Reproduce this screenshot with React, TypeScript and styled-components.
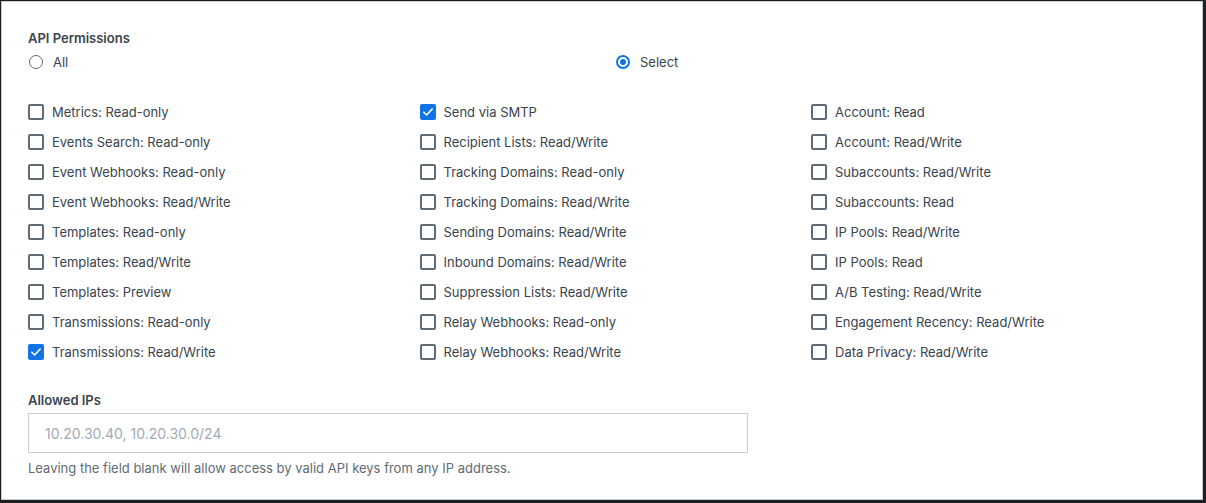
import React, { FC } from 'react';
import styled, { createGlobalStyle } from 'styled-components';

const GlobalStyle = createGlobalStyle`
  html, body {
    margin: 0;
    padding: 0;
    background: #ffffff;
  }
  body {
    font-family: Inter, "Noto Sans", sans-serif;
    -webkit-font-smoothing: antialiased;
  }
`;

const Frame = styled.div`
  box-sizing: border-box;
  width: 1206px;
  height: 503px;
  border-style: solid;
  border-color: #1e1f21;
  border-width: 1px 3px 3px 1px;
`;

const Panel = styled.section`
  box-sizing: border-box;
  height: 100%;
  border: 1px solid #c4ccd4;
  background: #ffffff;
  padding: 26px 0 0 26px;
  color: #39444d;
  overflow: hidden;
`;

const Label = styled.div`
  font-size: 13px;
  line-height: 20px;
  font-weight: 600;
  color: #39444d;
`;

const RadioRow = styled.div`
  display: grid;
  grid-template-columns: 587px 587px;
  margin-top: 4px;
`;

const Option = styled.label`
  display: flex;
  align-items: center;
  height: 20px;
  gap: 10px;
  font-size: 13px;
  color: #39444d;
`;

const RadioMark = styled.span<{ $checked?: boolean }>`
  box-sizing: border-box;
  width: 14px;
  height: 14px;
  border-radius: 50%;
  border: ${(p) => (p.$checked ? '2px solid #1273e6' : '1.5px solid #5f6b75')};
  margin-left: 1px;
  display: flex;
  align-items: center;
  justify-content: center;

  &::after {
    content: '';
    display: ${(p) => (p.$checked ? 'block' : 'none')};
    width: 6px;
    height: 6px;
    border-radius: 50%;
    background: #1273e6;
  }
`;

const Grid = styled.div`
  display: grid;
  grid-template-columns: repeat(3, 391.5px);
  grid-auto-flow: column;
  grid-template-rows: repeat(9, 30px);
  margin-top: 25px;
`;

const CheckRow = styled.label`
  display: flex;
  align-items: center;
  gap: 8px;
  font-size: 13px;
  color: #39444d;
`;

const Box = styled.span<{ $checked?: boolean }>`
  box-sizing: border-box;
  width: 16px;
  height: 16px;
  border-radius: 2px;
  border: ${(p) => (p.$checked ? 'none' : '2px solid #5f6b75')};
  background: ${(p) => (p.$checked ? '#1273e6' : '#ffffff')};
  display: flex;
  align-items: center;
  justify-content: center;
  flex: none;
`;

const IpSection = styled.div`
  margin-top: 23px;
`;

const Input = styled.input`
  box-sizing: border-box;
  display: block;
  width: 720px;
  height: 40px;
  margin-top: 3px;
  border: 1px solid #c4ccd4;
  border-radius: 0;
  padding: 0 16px;
  font-family: Inter, "Noto Sans", sans-serif;
  font-size: 14px;
  color: #39444d;
  outline: none;

  &::placeholder {
    color: #a2abb3;
  }
`;

const Help = styled.p`
  margin: 6px 0 0;
  font-size: 13px;
  line-height: 18px;
  color: #5f6b75;
`;

const permissions: { label: string; checked?: boolean }[] = [
  { label: 'Metrics: Read-only' },
  { label: 'Events Search: Read-only' },
  { label: 'Event Webhooks: Read-only' },
  { label: 'Event Webhooks: Read/Write' },
  { label: 'Templates: Read-only' },
  { label: 'Templates: Read/Write' },
  { label: 'Templates: Preview' },
  { label: 'Transmissions: Read-only' },
  { label: 'Transmissions: Read/Write', checked: true },
  { label: 'Send via SMTP', checked: true },
  { label: 'Recipient Lists: Read/Write' },
  { label: 'Tracking Domains: Read-only' },
  { label: 'Tracking Domains: Read/Write' },
  { label: 'Sending Domains: Read/Write' },
  { label: 'Inbound Domains: Read/Write' },
  { label: 'Suppression Lists: Read/Write' },
  { label: 'Relay Webhooks: Read-only' },
  { label: 'Relay Webhooks: Read/Write' },
  { label: 'Account: Read' },
  { label: 'Account: Read/Write' },
  { label: 'Subaccounts: Read/Write' },
  { label: 'Subaccounts: Read' },
  { label: 'IP Pools: Read/Write' },
  { label: 'IP Pools: Read' },
  { label: 'A/B Testing: Read/Write' },
  { label: 'Engagement Recency: Read/Write' },
  { label: 'Data Privacy: Read/Write' },
];

const Check: FC = () => (
  <svg width="12" height="12" viewBox="0 0 12 12" fill="none">
    <path d="M1.8 6.2l2.8 2.8 5.6-6" stroke="#fff" strokeWidth="1.6" strokeLinecap="round" strokeLinejoin="round" />
  </svg>
);

const App: FC = () => (
  <>
    <GlobalStyle />
    <Frame>
      <Panel>
        <Label>API Permissions</Label>
        <RadioRow>
          <Option>
            <RadioMark />
            All
          </Option>
          <Option>
            <RadioMark $checked />
            Select
          </Option>
        </RadioRow>
        <Grid>
          {permissions.map((p) => (
            <CheckRow key={p.label}>
              <Box $checked={p.checked}>{p.checked && <Check />}</Box>
              {p.label}
            </CheckRow>
          ))}
        </Grid>
        <IpSection>
          <Label>Allowed IPs</Label>
          <Input placeholder="10.20.30.40, 10.20.30.0/24" />
          <Help>Leaving the field blank will allow access by valid API keys from any IP address.</Help>
        </IpSection>
      </Panel>
    </Frame>
  </>
);

export default App;
